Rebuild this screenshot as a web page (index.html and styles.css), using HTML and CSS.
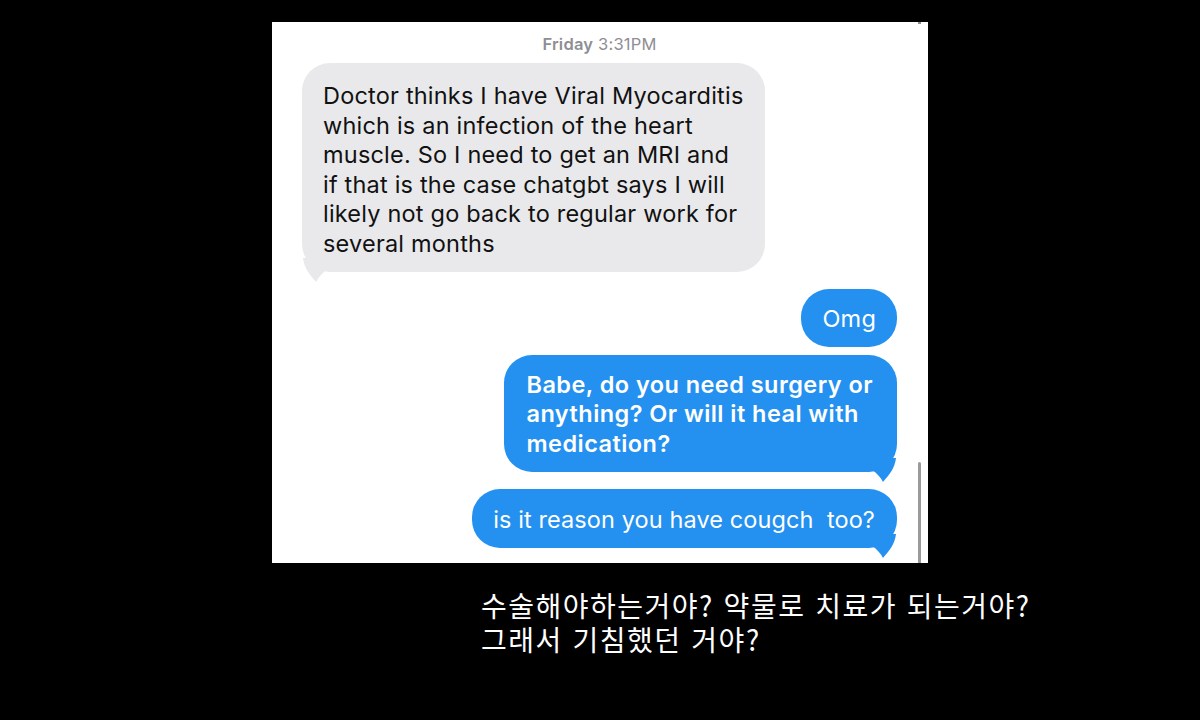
FILE: index.html
```html
<!DOCTYPE html>
<html lang="en">
<head>
  <meta charset="UTF-8" />
  <meta name="viewport" content="width=device-width, initial-scale=1.0" />
  <title>Messages</title>
  <link rel="stylesheet" href="styles.css">
</head>
<body>
  <div class="screen">
    <div class="chat">
      <div class="scrollbar"></div>
      <div class="notch"></div>
      <div class="stamp"><b>Friday</b> 3:31PM</div>

      <div class="bubble in">
        Doctor thinks I have Viral Myocarditis<br>
        which is an infection of the heart<br>
        muscle. So I need to get an MRI and<br>
        if that is the case chatgbt says I will<br>
        likely not go back to regular work for<br>
        several months
        <svg class="tail" viewBox="0 0 24 24"><path d="M0 0 C1 10 7 17 13 24 C15 20 19 15 24 12 L24 0 Z"/></svg>
      </div>

      <div class="bubble out short">Omg</div>

      <div class="bubble out bold">
        Babe, do you need surgery or<br>
        anything? Or will it heal with<br>
        medication?
        <svg class="tail" viewBox="0 0 24 24"><path d="M0 0 C1 10 7 17 13 24 C15 20 19 15 24 12 L24 0 Z"/></svg>
      </div>

      <div class="bubble out last">is it reason you have cougch&nbsp; too?
        <svg class="tail" viewBox="0 0 24 24"><path d="M0 0 C1 10 7 17 13 24 C15 20 19 15 24 12 L24 0 Z"/></svg>
      </div>
    </div>

    <div class="caption">
      <div class="line">수술해야하는거야? 약물로 치료가 되는거야?</div>
      <div class="line">그래서 기침했던 거야?</div>
    </div>
  </div>
</body>
</html>
```

FILE: styles.css
```css
body {
  margin: 0;
  background: #000;
  font-family: Inter, "Liberation Sans", sans-serif;
}
.screen {
  width: 1200px;
  height: 720px;
  padding-top: 22px;
  box-sizing: border-box;
}
.chat {
  position: relative;
  width: 656px;
  height: 541px;
  margin-left: 272px;
  background: #fff;
  display: flex;
  flex-direction: column;
  padding: 0 31px 0 30px;
  box-sizing: border-box;
}
.scrollbar {
  position: absolute;
  right: 7px;
  bottom: 0;
  width: 3px;
  height: 101px;
  background: #9a9a9a;
  border-radius: 2px 2px 0 0;
}
.notch {
  position: absolute;
  right: 7px;
  top: 0;
  width: 3px;
  height: 2px;
  background: #8c8c8c;
}
.stamp {
  text-align: center;
  font-size: 16.5px;
  color: #8e8e93;
  margin-top: 11px;
  height: 22px;
  line-height: 22px;
  letter-spacing: 0.2px;
}
.stamp b {
  font-weight: 600;
}
.bubble {
  position: relative;
  font-size: 23.5px;
  line-height: 29.5px;
  letter-spacing: 0.2px;
  border-radius: 28px;
  width: fit-content;
  white-space: nowrap;
}
.bubble .tail {
  position: absolute;
  bottom: -10px;
  width: 24px;
  height: 24px;
}
.in {
  background: #e9e9eb;
  color: #111;
  margin-top: 8px;
  padding: 18px 22px 14px 21px;
}
.in .tail {
  left: 1px;
  fill: #e9e9eb;
}
.out {
  align-self: flex-end;
  background: #2490f0;
  color: #fff;
}
.out .tail {
  right: 1px;
  fill: #2490f0;
  transform: scaleX(-1);
}
.short {
  margin-top: 17px;
  padding: 15px 21px 13px;
}
.bold {
  font-weight: 600;
  letter-spacing: 0.45px;
  margin-top: 8px;
  padding: 15px 24px 14px 22px;
}
.last {
  margin-top: 17px;
  letter-spacing: 0.1px;
  padding: 16px 22px 13px 21px;
}
.caption {
  margin: 25px 0 0 481px;
  color: #fff;
  font-family: "Noto Sans CJK KR", sans-serif;
  font-size: 28px;
  letter-spacing: 1.5px;
  word-spacing: 2px;
}
.line {
  height: 34px;
  line-height: 34px;
}
```
